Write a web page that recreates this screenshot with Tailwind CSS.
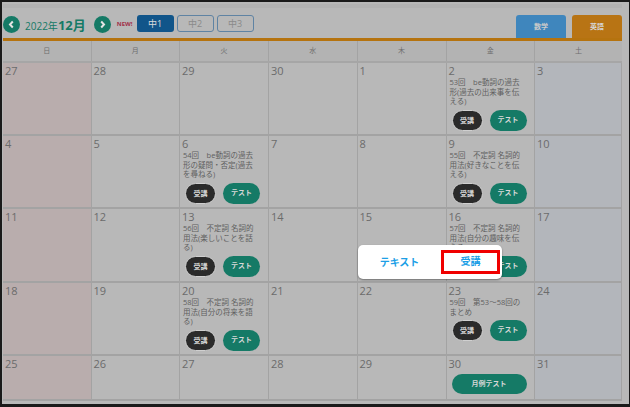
<!DOCTYPE html>
<html lang="ja">
<head>
  <meta charset="UTF-8" />
  <title>カレンダー</title>
  <script src="https://cdn.jsdelivr.net/npm/@tailwindcss/browser@4"></script>
</head>
<body class="bg-[#1a1a1a] overflow-hidden">
<div class="relative w-[630px] h-[407px] pt-[2px] pl-[2px] pr-[1px] pb-[3px] font-['Open_Sans','Noto_Sans_CJK_JP',sans-serif] text-[#6b6b6b]">
  <div class="h-full bg-[#b8b8b8] pl-[1px] pr-[7px]">
    <!-- header -->
    <div class="h-[39px] pt-[13px] flex items-start border-b-[3px] border-[#b5730f] relative">
      <div class="absolute top-[2px] left-0 right-0 h-[4px] bg-[#b2b2b2]"></div>
      <span class="w-[17px] h-[17px] mt-[1px] rounded-full bg-[#157a66] flex items-center justify-center">
        <svg width="9" height="9" viewBox="0 0 9 9"><path d="M5.8 1.5 3 4.5l2.8 3" fill="none" stroke="#e4e4e4" stroke-width="2"/></svg>
      </span>
      <span class="ml-[5px] mt-[1px] h-[18px] leading-[18px] text-[#157a66] text-[10px] whitespace-nowrap">2022年<b class="text-[13px]">12月</b></span>
      <span class="w-[17px] h-[17px] mt-[1px] ml-[8px] rounded-full bg-[#157a66] flex items-center justify-center">
        <svg width="9" height="9" viewBox="0 0 9 9"><path d="M3.2 1.5 6 4.5l-2.8 3" fill="none" stroke="#e4e4e4" stroke-width="2"/></svg>
      </span>
      <span class="ml-[6px] mt-[6px] text-[6px] font-bold leading-[7px] text-[#a03048]">NEW!</span>
      <span class="ml-[4px] w-[37px] h-[17px] rounded-[3px] bg-[#11558a] text-[#dcdcdc] text-[9px] leading-[17px] text-center">中1</span>
      <span class="ml-[3px] w-[37px] h-[17px] rounded-[3px] border border-[#5f83a3] text-[#8a8a8a] text-[9px] leading-[15px] text-center">中2</span>
      <span class="ml-[3px] w-[37px] h-[17px] rounded-[3px] border border-[#5f83a3] text-[#8a8a8a] text-[9px] leading-[15px] text-center">中3</span>
      <span class="ml-auto w-[50px] h-[23px] rounded-t-[3px] bg-[#3f86bd] text-[#c9c9c9] text-[7px] leading-[24px] text-center font-bold">数学</span>
      <span class="ml-[6px] w-[50px] h-[23px] rounded-t-[3px] bg-[#b87414] text-[#d6d6d6] text-[7px] leading-[24px] text-center font-bold">英語</span>
    </div>
    <!-- weekdays -->
    <div class="grid grid-cols-[88.5px_88.5px_89px_88.5px_89px_88.5px_1fr] h-[22px] text-[7px] leading-[20px] text-center text-[#6f6f6f] bg-[#b3b3b3] border-b-[2px] border-[#a6a6a6]">
      <div class="border-r border-[#a3a3a3]">日</div>
      <div class="border-r border-[#a3a3a3]">月</div>
      <div class="border-r border-[#a3a3a3]">火</div>
      <div class="border-r border-[#a3a3a3]">水</div>
      <div class="border-r border-[#a3a3a3]">木</div>
      <div class="border-r border-[#a3a3a3]">金</div>
      <div>土</div>
    </div>
    <!-- weeks -->
    <div class="grid grid-cols-[88.5px_88.5px_89px_88.5px_89px_88.5px_1fr] grid-rows-[73px_73px_74px_73px_45px] text-[11px] leading-[14px] [&>div]:border-r [&>div]:border-b-[2px] [&>div]:border-[#a3a3a3] [&>div]:pl-[2px] [&>div]:pt-[1px]">
      <div class="bg-[#b9adad]">27</div><div>28</div><div>29</div><div>30</div><div>1</div>
      <div>2
        <p class="text-[7.5px] leading-[9.5px] pl-[1px] text-[#5f5f5f] whitespace-nowrap">53回　be動詞の過去<br>形(過去の出来事を伝<br>える)</p>
        <div class="flex gap-[7px] pl-[3px] mt-[3px]"><span class="w-[31px] h-[21px] rounded-full bg-[#2b2b2b] border border-[#d0d0d0] text-[#d8d8d8] text-[7px] leading-[19px] text-center font-bold">受講</span><span class="w-[37px] h-[21px] rounded-full bg-[#157a66] text-[#d8d8d8] text-[7px] leading-[20px] text-center font-bold">テスト</span></div>
      </div>
      <div class="bg-[#b3b6bb] border-r-0">3</div>

      <div class="bg-[#b9adad]">4</div><div>5</div>
      <div>6
        <p class="text-[7.5px] leading-[9.5px] pl-[1px] text-[#5f5f5f] whitespace-nowrap">54回　be動詞の過去<br>形の疑問・否定(過去<br>を尋ねる)</p>
        <div class="flex gap-[7px] pl-[3px] mt-[3px]"><span class="w-[31px] h-[21px] rounded-full bg-[#2b2b2b] border border-[#d0d0d0] text-[#d8d8d8] text-[7px] leading-[19px] text-center font-bold">受講</span><span class="w-[37px] h-[21px] rounded-full bg-[#157a66] text-[#d8d8d8] text-[7px] leading-[20px] text-center font-bold">テスト</span></div>
      </div>
      <div>7</div><div>8</div>
      <div>9
        <p class="text-[7.5px] leading-[9.5px] pl-[1px] text-[#5f5f5f] whitespace-nowrap">55回　不定詞 名詞的<br>用法(好きなことを伝<br>える)</p>
        <div class="flex gap-[7px] pl-[3px] mt-[3px]"><span class="w-[31px] h-[21px] rounded-full bg-[#2b2b2b] border border-[#d0d0d0] text-[#d8d8d8] text-[7px] leading-[19px] text-center font-bold">受講</span><span class="w-[37px] h-[21px] rounded-full bg-[#157a66] text-[#d8d8d8] text-[7px] leading-[20px] text-center font-bold">テスト</span></div>
      </div>
      <div class="bg-[#b3b6bb] border-r-0">10</div>

      <div class="bg-[#b9adad]">11</div><div>12</div>
      <div>13
        <p class="text-[7.5px] leading-[9.5px] pl-[1px] text-[#5f5f5f] whitespace-nowrap">56回　不定詞 名詞的<br>用法(楽しいことを話<br>る)</p>
        <div class="flex gap-[7px] pl-[3px] mt-[3px]"><span class="w-[31px] h-[21px] rounded-full bg-[#2b2b2b] border border-[#d0d0d0] text-[#d8d8d8] text-[7px] leading-[19px] text-center font-bold">受講</span><span class="w-[37px] h-[21px] rounded-full bg-[#157a66] text-[#d8d8d8] text-[7px] leading-[20px] text-center font-bold">テスト</span></div>
      </div>
      <div>14</div><div>15</div>
      <div>16
        <p class="text-[7.5px] leading-[9.5px] pl-[1px] text-[#5f5f5f] whitespace-nowrap">57回　不定詞 名詞的<br>用法(自分の趣味を伝<br>える)</p>
        <div class="flex gap-[7px] pl-[3px] mt-[3px]"><span class="w-[31px] h-[21px] rounded-full bg-[#2b2b2b] border border-[#d0d0d0] text-[#d8d8d8] text-[7px] leading-[19px] text-center font-bold">受講</span><span class="w-[37px] h-[21px] rounded-full bg-[#157a66] text-[#d8d8d8] text-[7px] leading-[20px] text-center font-bold">テスト</span></div>
      </div>
      <div class="bg-[#b3b6bb] border-r-0">17</div>

      <div class="bg-[#b9adad]">18</div><div>19</div>
      <div>20
        <p class="text-[7.5px] leading-[9.5px] pl-[1px] text-[#5f5f5f] whitespace-nowrap">58回　不定詞 名詞的<br>用法(自分の将来を語<br>る)</p>
        <div class="flex gap-[7px] pl-[3px] mt-[3px]"><span class="w-[31px] h-[21px] rounded-full bg-[#2b2b2b] border border-[#d0d0d0] text-[#d8d8d8] text-[7px] leading-[19px] text-center font-bold">受講</span><span class="w-[37px] h-[21px] rounded-full bg-[#157a66] text-[#d8d8d8] text-[7px] leading-[20px] text-center font-bold">テスト</span></div>
      </div>
      <div>21</div><div>22</div>
      <div>23
        <p class="text-[7.5px] leading-[9.5px] pl-[1px] text-[#5f5f5f] whitespace-nowrap">59回　第53～58回の<br>まとめ</p>
        <div class="flex gap-[7px] pl-[3px] mt-[3px]"><span class="w-[31px] h-[21px] rounded-full bg-[#2b2b2b] border border-[#d0d0d0] text-[#d8d8d8] text-[7px] leading-[19px] text-center font-bold">受講</span><span class="w-[37px] h-[21px] rounded-full bg-[#157a66] text-[#d8d8d8] text-[7px] leading-[20px] text-center font-bold">テスト</span></div>
      </div>
      <div class="bg-[#b3b6bb] border-r-0">24</div>

      <div class="bg-[#b9adad]">25</div><div>26</div><div>27</div><div>28</div><div>29</div>
      <div>30
        <div class="pl-[3px] mt-[3px]"><span class="block w-[75px] h-[20px] rounded-full bg-[#157a66] text-[#d8d8d8] text-[7px] leading-[20px] text-center font-bold">月例テスト</span></div>
      </div>
      <div class="bg-[#b3b6bb] border-r-0">31</div>
    </div>
  </div>
  <!-- popup over the calendar -->
  <div class="absolute left-[358px] top-[245px] w-[144px] h-[34px] bg-white rounded-[5px] shadow-[0_1px_2px_rgba(0,0,0,0.4)] flex items-center text-[10px] font-bold text-[#1d9fe6]">
    <span class="w-[83px] text-center">テキスト</span>
    <span class="w-[59px] h-[24px] border-[3px] border-[#f00000] leading-[16px] text-center">受講</span>
  </div>
</div>
</body>
</html>
